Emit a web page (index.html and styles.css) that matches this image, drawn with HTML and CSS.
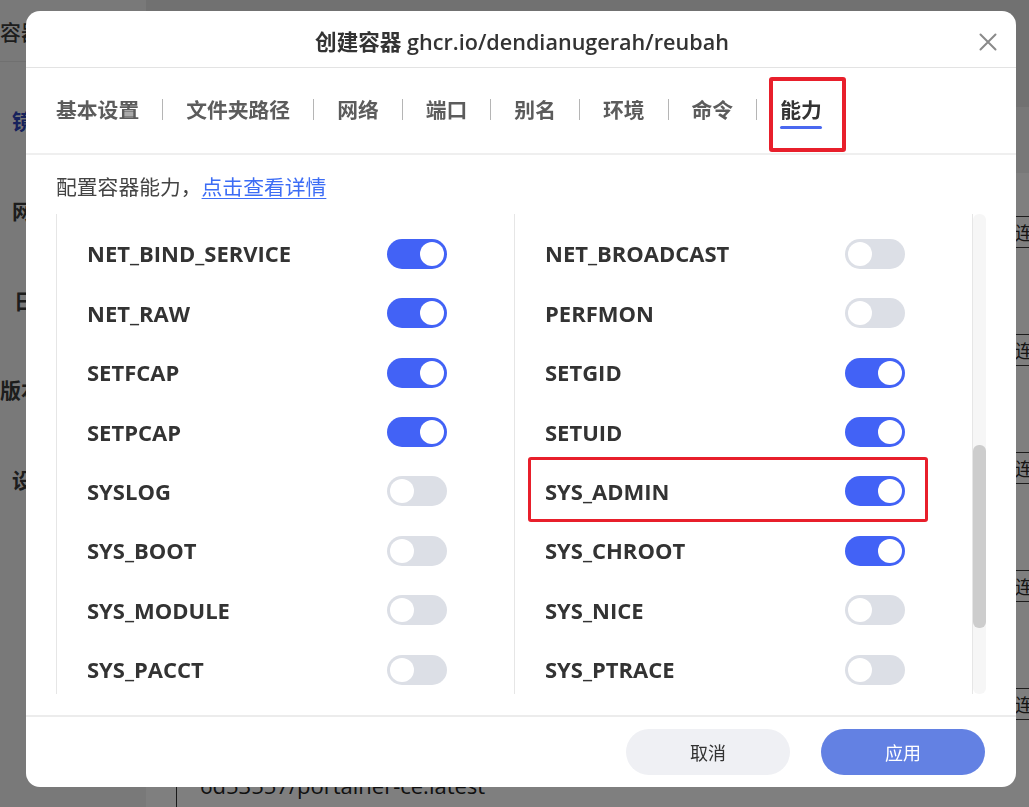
FILE: index.html
```html
<!DOCTYPE html>
<html lang="zh-CN">
<head>
<meta charset="utf-8">
<title>创建容器</title>
<link rel="stylesheet" href="styles.css">
</head>
<body>
<div class="page">
  <aside class="sidebar">
    <div class="nav nav-title">容器器</div>
    <div class="nav nav-active">镜像</div>
    <div class="nav">网络</div>
    <div class="nav nav-log">日志</div>
    <div class="nav nav-ver">版本</div>
    <div class="nav">设置</div>
  </aside>
  <main class="main">
    <div class="main-head"></div>
    <div class="main-sub"></div>
    <div class="bg-row"><span class="bg-name"></span><span class="bg-btn">连接</span></div>
    <div class="bg-row"><span class="bg-name"></span><span class="bg-btn">连接</span></div>
    <div class="bg-row"><span class="bg-name"></span><span class="bg-btn">连接</span></div>
    <div class="bg-row"><span class="bg-name"></span><span class="bg-btn">连接</span></div>
    <div class="bg-row"><span class="bg-name"></span><span class="bg-btn">连接</span></div>
    <div class="bg-foot"><span class="bg-foot-text">6d53557/portainer-ce:latest</span></div>
  </main>
</div>

<div class="overlay">
  <div class="modal">
    <div class="modal-header">
      <div class="modal-title">创建容器 ghcr.io/dendianugerah/reubah</div>
      <button class="close" aria-label="关闭">
        <svg width="20" height="20" viewBox="0 0 20 20"><path d="M2.5 2.5 L17.5 17.5 M17.5 2.5 L2.5 17.5" stroke="#8a8a8a" stroke-width="2" stroke-linecap="round" fill="none"/></svg>
      </button>
    </div>
    <nav class="tabs">
      <span class="tab">基本设置</span><span class="sep"></span>
      <span class="tab">文件夹路径</span><span class="sep"></span>
      <span class="tab">网络</span><span class="sep"></span>
      <span class="tab">端口</span><span class="sep"></span>
      <span class="tab">别名</span><span class="sep"></span>
      <span class="tab">环境</span><span class="sep"></span>
      <span class="tab">命令</span><span class="sep"></span>
      <span class="tab tab-active">能力<span class="mark mark-tab"></span></span>
    </nav>
    <div class="modal-body">
      <p class="desc">配置容器能力，<a class="link" href="#">点击查看详情</a></p>
      <div class="caps-wrap">
        <div class="caps">
          <div class="col">
            <div class="cap"><span class="cap-name">NET_BIND_SERVICE</span><span class="sw on"></span></div>
            <div class="cap"><span class="cap-name">NET_RAW</span><span class="sw on"></span></div>
            <div class="cap"><span class="cap-name">SETFCAP</span><span class="sw on"></span></div>
            <div class="cap"><span class="cap-name">SETPCAP</span><span class="sw on"></span></div>
            <div class="cap"><span class="cap-name">SYSLOG</span><span class="sw"></span></div>
            <div class="cap"><span class="cap-name">SYS_BOOT</span><span class="sw"></span></div>
            <div class="cap"><span class="cap-name">SYS_MODULE</span><span class="sw"></span></div>
            <div class="cap"><span class="cap-name">SYS_PACCT</span><span class="sw"></span></div>
          </div>
          <div class="col">
            <div class="cap"><span class="cap-name">NET_BROADCAST</span><span class="sw"></span></div>
            <div class="cap"><span class="cap-name">PERFMON</span><span class="sw"></span></div>
            <div class="cap"><span class="cap-name">SETGID</span><span class="sw on"></span></div>
            <div class="cap"><span class="cap-name">SETUID</span><span class="sw on"></span></div>
            <div class="cap cap-marked"><span class="cap-name">SYS_ADMIN</span><span class="sw on"></span><span class="mark mark-row"></span></div>
            <div class="cap"><span class="cap-name">SYS_CHROOT</span><span class="sw on"></span></div>
            <div class="cap"><span class="cap-name">SYS_NICE</span><span class="sw"></span></div>
            <div class="cap"><span class="cap-name">SYS_PTRACE</span><span class="sw"></span></div>
          </div>
        </div>
        <div class="scrollbar"><div class="thumb"></div></div>
      </div>
    </div>
    <div class="modal-footer">
      <button class="btn btn-cancel">取消</button>
      <button class="btn btn-apply">应用</button>
    </div>
  </div>
</div>
</body>
</html>
```

FILE: styles.css
```css
* { box-sizing: border-box; }

html, body {
  margin: 0;
  padding: 0;
  width: 1029px;
  height: 807px;
  overflow: hidden;
  font-family: "Open Sans", "Noto Sans CJK SC", sans-serif;
}

/* ---------- background page ---------- */
.page {
  display: flex;
  width: 1029px;
  height: 807px;
}

.sidebar {
  width: 146px;
  flex: none;
  background: #f3f3f3;
  display: flex;
  flex-direction: column;
}

.nav {
  height: 90px;
  flex: none;
  display: flex;
  align-items: center;
  padding-left: 12px;
  font-family: "Noto Sans CJK SC", sans-serif;
  font-size: 21px;
  font-weight: 700;
  color: #3a3a3a;
}

.nav-title {
  height: 62px;
  padding-left: 0;
  font-weight: 500;
  border-bottom: 1px solid #e0e0e0;
  margin-bottom: 13px;
}

.nav-active { color: #2f45b8; }
.nav-log { padding-left: 14px; height: 89px; }
.nav-ver { padding-left: 0; }

.main {
  flex: 1;
  background: #ffffff;
  display: flex;
  flex-direction: column;
  overflow: hidden;
}

.main-head {
  height: 107px;
  background: #e2e2e2;
  flex: none;
}

.main-sub {
  height: 66px;
  background: #f0f0f0;
  flex: none;
}

.bg-row {
  height: 118px;
  flex: none;
  display: flex;
  align-items: center;
}

.bg-name { flex: 1; }

.bg-btn {
  width: 80px;
  height: 32px;
  margin-right: -66px;
  border-top: 1px solid #3a3a3a;
  border-bottom: 1px solid #3a3a3a;
  font-family: "Noto Sans CJK SC", sans-serif;
  font-size: 18px;
  line-height: 30px;
  color: #2a2a2a;
}

.bg-foot {
  margin-left: 30px;
  border-left: 1px solid #333;
  padding: 10px 0 0 23px;
  flex: 1;
}

.bg-foot-text {
  font-size: 22px;
  line-height: 24px;
  color: #222;
}

/* ---------- overlay & modal ---------- */
.overlay {
  position: fixed;
  inset: 0;
  background: rgba(0, 0, 0, 0.5);
  padding: 11px 13px 20px 26px;
}

.modal {
  width: 990px;
  height: 776px;
  background: #ffffff;
  border-radius: 14px;
  display: flex;
  flex-direction: column;
  overflow: hidden;
  position: relative;
}

.modal-header {
  height: 57px;
  flex: none;
  display: flex;
  align-items: center;
  justify-content: center;
  border-bottom: 1px solid #e3e3e3;
  position: relative;
}

.modal-title {
  font-size: 21.6px;
  font-weight: 600;
  color: #333333;
  margin-top: 3px;
  margin-left: 2px;
}

.close {
  position: absolute;
  right: 18px;
  top: 21px;
  width: 20px;
  height: 20px;
  padding: 0;
  border: 0;
  background: none;
  display: flex;
}

.tabs {
  height: 87px;
  flex: none;
  display: flex;
  align-items: center;
  gap: 23px;
  padding-left: 30px;
  border-bottom: 2px solid #efefef;
}

.tab {
  position: relative;
  font-family: "Noto Sans CJK SC", sans-serif;
  font-size: 20.8px;
  font-weight: 700;
  line-height: 28px;
  color: #5c5c5c;
  white-space: nowrap;
  margin-top: -3px;
}

.tab-active { color: #333333; }

.tab-active::after {
  content: "";
  position: absolute;
  left: 0;
  right: 0;
  top: 31px;
  height: 3px;
  border-radius: 2px;
  background: #4a68f0;
}

.sep {
  width: 1px;
  height: 21px;
  background: #b5b5b5;
  flex: none;
  margin-top: -3px;
}

/* red annotation boxes */
.mark {
  position: absolute;
  border: 4px solid #e81f2b;
  border-radius: 3px;
  pointer-events: none;
}

.mark-tab {
  left: -11px;
  top: -18px;
  width: 77px;
  height: 75px;
}

.mark-row {
  left: 13px;
  top: -5px;
  width: 400px;
  height: 65px;
  border-width: 3.5px;
}

/* ---------- body ---------- */
.modal-body {
  flex: 1;
  padding: 16px 29px 0 30px;
  display: flex;
  flex-direction: column;
}

.desc {
  margin: 0 0 13px 0;
  font-family: "Noto Sans CJK SC", sans-serif;
  font-size: 20.8px;
  line-height: 30px;
  color: #444444;
}

.link {
  color: #3d6df5;
  text-decoration: underline;
  text-underline-offset: 3px;
  text-decoration-thickness: 1px;
}

.caps-wrap {
  height: 480px;
  flex: none;
  display: flex;
}

.caps {
  display: flex;
  border-right: 1px solid #e6e6e6;
  overflow: hidden;
}

.col {
  width: 458px;
  border-left: 1px solid #e6e6e6;
  display: flex;
  flex-direction: column;
  padding-top: 10px;
}

.cap {
  height: 59.45px;
  flex: none;
  display: flex;
  align-items: center;
  justify-content: space-between;
  padding: 0 67px 0 30px;
  position: relative;
}

.cap-name {
  font-size: 22px;
  font-weight: 700;
  color: #333333;
  margin-top: -1px;
}

.sw {
  width: 60px;
  height: 30px;
  border-radius: 15px;
  background: #dcdfe6;
  position: relative;
  flex: none;
  display: flex;
  align-items: center;
  padding: 0 3px;
}

.sw::after {
  content: "";
  width: 24px;
  height: 24px;
  border-radius: 50%;
  background: #ffffff;
}

.sw.on {
  background: #4262f6;
  justify-content: flex-end;
}

.scrollbar {
  width: 13px;
  background: #f6f6f6;
  border-radius: 6px;
  padding-top: 231px;
}

.thumb {
  height: 183px;
  background: #cdcdcd;
  border-radius: 6px;
}

/* ---------- footer ---------- */
.modal-footer {
  height: 72px;
  flex: none;
  border-top: 2px solid #ececec;
  display: flex;
  justify-content: flex-end;
  gap: 31px;
  padding: 12px 31px 0 0;
}

.btn {
  width: 164px;
  height: 46px;
  border: 0;
  border-radius: 23px;
  font-family: "Noto Sans CJK SC", sans-serif;
  font-size: 18px;
  cursor: pointer;
}

.btn-cancel {
  background: #eff0f4;
  color: #333333;
}

.btn-apply {
  background: #6381e3;
  color: #ffffff;
}
```
